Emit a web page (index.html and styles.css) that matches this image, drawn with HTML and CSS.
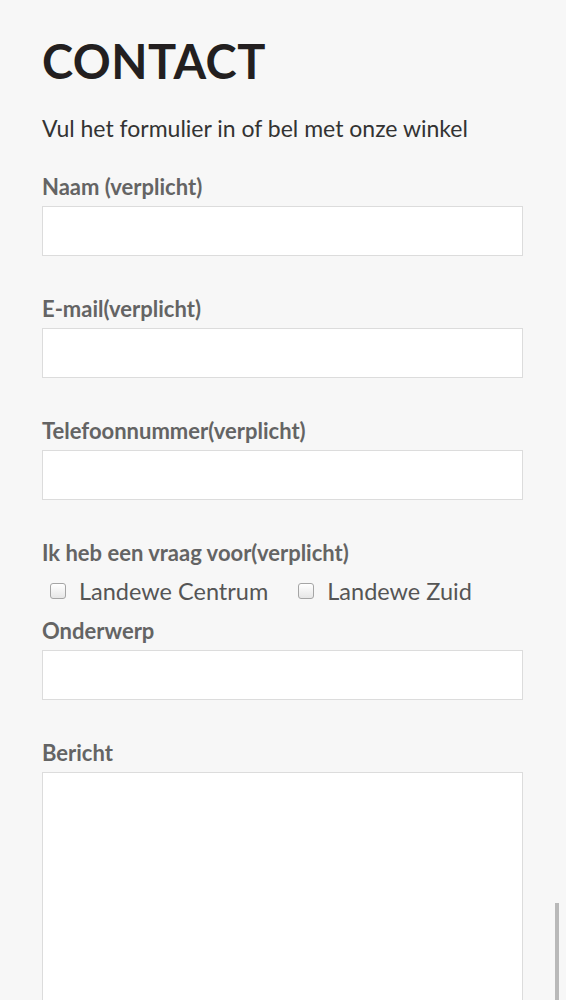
FILE: index.html
```html
<!DOCTYPE html>
<html lang="nl">
<head>
<meta charset="utf-8">
<link rel="stylesheet" href="styles.css">
</head>
<body>
<main class="page">
  <h1 class="title">CONTACT</h1>
  <p class="intro">Vul het formulier in of bel met onze winkel</p>
  <form class="form">
    <div class="field">
      <label class="label">Naam (verplicht)</label>
      <input class="input" type="text">
    </div>
    <div class="field">
      <label class="label">E-mail(verplicht)</label>
      <input class="input" type="text">
    </div>
    <div class="field">
      <label class="label">Telefoonnummer(verplicht)</label>
      <input class="input" type="text">
    </div>
    <div class="field field-check">
      <span class="label">Ik heb een vraag voor(verplicht)</span>
      <div class="checks">
        <label class="check"><span class="box"></span>Landewe Centrum</label>
        <label class="check"><span class="box"></span>Landewe Zuid</label>
      </div>
    </div>
    <div class="field">
      <label class="label">Onderwerp</label>
      <input class="input" type="text">
    </div>
    <div class="field field-last">
      <label class="label">Bericht</label>
      <div class="textarea"></div>
    </div>
  </form>
</main>
<div class="scrollbar"></div>
</body>
</html>
```

FILE: styles.css
```css
html, body {
  margin: 0;
  padding: 0;
  background: #f7f7f7;
  height: 1000px;
  overflow: hidden;
}
.page {
  padding: 33px 43px 0 42px;
  font-family: Lato, "Open Sans", sans-serif;
}
.title {
  margin: 0;
  font-family: Lato, sans-serif;
  font-weight: 700;
  font-size: 47px;
  line-height: 56px;
  letter-spacing: 0.5px;
  color: #231f20;
}
.intro {
  margin: 25px 0 0;
  font-size: 23px;
  line-height: 28px;
  color: #333;
}
.form {
  display: flex;
  flex-direction: column;
  margin-top: 33px;
}
.field {
  display: flex;
  flex-direction: column;
  margin-bottom: 41px;
}
.field-check {
  margin-bottom: 13px;
}
.field-last {
  margin-bottom: 0;
}
.label {
  font-size: 22px;
  font-weight: 700;
  line-height: 24px;
  color: #646464;
  margin-bottom: 7px;
}
.input {
  box-sizing: border-box;
  height: 50px;
  width: 100%;
  border: 1px solid #dcdcdc;
  background: #fff;
  margin: 0;
  padding: 0;
}
.textarea {
  box-sizing: border-box;
  height: 229px;
  border: 1px solid #dcdcdc;
  border-bottom: none;
  background: #fff;
}
.checks {
  display: flex;
  gap: 30px;
  padding-left: 8px;
  margin-top: 4px;
}
.check {
  display: flex;
  align-items: center;
  font-size: 23.5px;
  line-height: 30px;
  color: #555;
}
.box {
  box-sizing: border-box;
  width: 16px;
  height: 16px;
  border: 1px solid #a5a5a5;
  border-radius: 3px;
  background: linear-gradient(#fff, #e6e6e6);
  margin-right: 13px;
}
.scrollbar {
  position: fixed;
  right: 7px;
  top: 903px;
  width: 4px;
  height: 97px;
  background: #b9b9b9;
}
```
